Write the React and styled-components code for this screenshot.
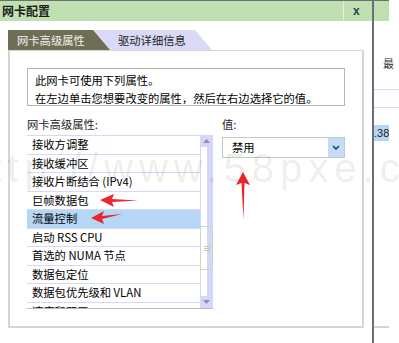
import React from 'react';
import styled, { createGlobalStyle } from 'styled-components';

const GlobalStyle = createGlobalStyle`
  html, body {
    margin: 0;
    padding: 0;
    background: #fff;
  }
  body {
    font-family: "Noto Sans CJK SC", "Liberation Sans", sans-serif;
    color: #000;
  }
`;

const Screen = styled.div`
  position: relative;
  width: 399px;
  height: 343px;
  overflow: hidden;
  background: #fff;
`;

const TitleBar = styled.div`
  position: relative;
  display: flex;
  align-items: center;
  width: 389px;
  height: 20px;
  border-top: 1px solid #6e6e6e;
  background: #c0e0b2;

  &::after {
    content: '';
    position: absolute;
    left: 372px;
    top: -1px;
    width: 2px;
    height: 22px;
    background: #6c6c7a;
  }
`;

const Title = styled.div`
  flex: 1;
  padding-left: 2px;
  font-size: 12px;
  font-weight: 700;
  color: #1c1c1c;
  line-height: 20px;
`;

const CloseBox = styled.div`
  width: 29px;
  height: 20px;
  margin-right: 17px;
  border-left: 1px solid #e6f0e0;
  display: flex;
  align-items: center;
  padding-left: 9px;
  box-sizing: border-box;
  font-family: "Liberation Sans", sans-serif;
  font-size: 12px;
  font-weight: 700;
  color: #24465a;
`;

const Content = styled.div`
  display: flex;
  height: 322px;
`;

const Main = styled.div`
  width: 372px;
  padding: 9px 0 0 8px;
  box-sizing: border-box;
`;

const Tabs = styled.div`
  display: flex;
  height: 20px;
`;

const Tab = styled.div`
  position: relative;
  z-index: ${p => (p.$active ? 2 : 1)};
  width: ${p => p.$width}px;
  margin-left: ${p => p.$overlap || 0}px;
  padding-left: ${p => p.$pad}px;
  box-sizing: border-box;
  background: ${p => (p.$active ? '#6e6e54' : '#dadaf8')};
  color: ${p => (p.$active ? '#f2f2ee' : '#1a1a1a')};
  clip-path: polygon(0 0, calc(100% - 17px) 0, 100% 100%, 0 100%);
  font-size: 11.3px;
  line-height: 20px;
`;

const Panel = styled.div`
  width: 356px;
  height: 278px;
  border: 2px solid #d6d6ce;
  border-top-width: 1px;
  box-sizing: border-box;
  padding: 17px 0 0 17px;
`;

const Description = styled.div`
  width: 318px;
  height: 38px;
  border: 1px solid #b4b4b0;
  box-sizing: border-box;
  padding: 2px 0 0 7px;
  font-size: 11.3px;
  line-height: 18px;
`;

const Columns = styled.div`
  display: flex;
  margin-top: 11px;
`;

const Column = styled.div`
  display: flex;
  flex-direction: column;
  width: ${p => p.$width}px;
  margin-left: ${p => p.$offset || 0}px;
`;

const FieldLabel = styled.div`
  font-size: 11.3px;
  line-height: 14px;
  color: #1e1e1e;
`;

const ListBox = styled.div`
  display: flex;
  height: 174px;
  margin-top: 4px;
  border-bottom: 1px solid #b8b8b4;
  box-sizing: border-box;
`;

const Items = styled.div`
  flex: 1;
  overflow: hidden;
  border-top: 1px solid #d8d8f6;
`;

const Item = styled.div`
  height: 17.5px;
  border-bottom: 1px solid #d8d8f6;
  padding-left: 5px;
  font-size: 11.3px;
  line-height: 17.5px;
  white-space: nowrap;
  background: ${p => (p.$selected ? '#b6d6f6' : '#fff')};
`;

const ScrollBar = styled.div`
  display: flex;
  flex-direction: column;
  width: 13px;
  background: linear-gradient(to right, #d6d6fa 0 1px, #fff 1px 7px, #d6d6fa 7px);
`;

const ScrollButton = styled.div`
  height: 12px;
  display: flex;
  align-items: center;
  justify-content: center;
  background: #d6d6fa;
`;

const Track = styled.div`
  flex: 1;
  display: flex;
  flex-direction: column;
`;

const Thumb = styled.div`
  height: 44px;
  margin-top: ${p => p.$top}px;
  border: 1px solid #c6dcbc;
  box-sizing: border-box;
  background: linear-gradient(to right, #fff 0 6px, #d6d6fa 6px);
  display: flex;
  align-items: center;
  justify-content: center;
`;

const Grip = styled.div`
  width: 6px;
  height: 5px;
  background: repeating-linear-gradient(to bottom, #c8c89a 0 1px, transparent 1px 2px);
`;

const Select = styled.div`
  display: flex;
  height: 21px;
  margin-top: 6px;
  border: 1px solid #bccebc;
  box-sizing: border-box;
`;

const SelectValue = styled.div`
  flex: 1;
  padding-left: 9px;
  font-size: 11.3px;
  line-height: 19px;
`;

const SelectButton = styled.div`
  width: 16px;
  display: flex;
  align-items: center;
  justify-content: center;
  background: #c4dcf8;
`;

const Strip = styled.div`
  flex: 1;
  border-left: 2px solid #6c6c7a;
  display: flex;
  flex-direction: column;
`;

const StripText = styled.div`
  margin-top: 36px;
  padding-left: 9px;
  font-size: 11px;
  line-height: 12px;
  color: #333;
`;

const StripRule = styled.div`
  height: 1px;
  margin-top: ${p => p.$gap}px;
  background: #d8d8f8;
`;

const StripCell = styled.div`
  width: 15px;
  height: 16px;
  margin-top: 17px;
  background: #b6d6f6;
  font-family: "Liberation Sans", sans-serif;
  font-size: 11px;
  line-height: 16px;
  color: #222;
  white-space: nowrap;
  overflow: hidden;
`;

const StripBase = styled.div`
  width: 15px;
  height: 2px;
  margin: auto 0 15px;
  background: #d6d6ce;
`;

const Watermark = styled.div`
  position: absolute;
  left: -38px;
  top: 148px;
  font-family: "Liberation Sans", Arial, sans-serif;
  font-size: 40px;
  line-height: 40px;
  letter-spacing: 6px;
  color: rgba(0, 0, 0, 0.085);
  white-space: nowrap;
  pointer-events: none;
`;

const Arrow = styled.svg`
  position: absolute;
  left: ${p => p.$x}px;
  top: ${p => p.$y}px;
  pointer-events: none;
`;

const properties = [
  '接收方调整',
  '接收缓冲区',
  '接收片断结合 (IPv4)',
  '巨帧数据包',
  '流量控制',
  '启动 RSS CPU',
  '首选的 NUMA 节点',
  '数据包定位',
  '数据包优先级和 VLAN',
  '速度和双工',
];

const Triangle = ({ down }) => (
  <svg width="7" height="4" viewBox="0 0 7 4">
    <path d={down ? 'M0 0H7L3.5 4Z' : 'M0 4H7L3.5 0Z'} fill="#8a96a8" />
  </svg>
);

const App = () => {
  return (
    <Screen>
      <GlobalStyle />
      <TitleBar>
        <Title>网卡配置</Title>
        <CloseBox>x</CloseBox>
      </TitleBar>

      <Content>
        <Main>
          <Tabs>
            <Tab $active $width={102} $pad={9}>网卡高级属性</Tab>
            <Tab $width={119} $overlap={-17} $pad={25}>驱动详细信息</Tab>
          </Tabs>

          <Panel>
            <Description>
              <div>此网卡可使用下列属性。</div>
              <div>在左边单击您想要改变的属性，然后在右边选择它的值。</div>
            </Description>

            <Columns>
              <Column $width={186}>
                <FieldLabel>网卡高级属性:</FieldLabel>
                <ListBox>
                  <Items>
                    {properties.map((name) => (
                      <Item key={name} $selected={name === '流量控制'}>{name}</Item>
                    ))}
                  </Items>
                  <ScrollBar>
                    <ScrollButton><Triangle /></ScrollButton>
                    <Track>
                      <Thumb $top={79}><Grip /></Thumb>
                    </Track>
                    <ScrollButton><Triangle down /></ScrollButton>
                  </ScrollBar>
                </ListBox>
              </Column>

              <Column $width={123} $offset={9}>
                <FieldLabel>值:</FieldLabel>
                <Select>
                  <SelectValue>禁用</SelectValue>
                  <SelectButton>
                    <svg width="8" height="5" viewBox="0 0 8 5">
                      <path d="M1 1L4 4L7 1" fill="none" stroke="#1c3a6a" strokeWidth="1.5" />
                    </svg>
                  </SelectButton>
                </Select>
              </Column>
            </Columns>
          </Panel>
        </Main>

        <Strip>
          <StripText>最</StripText>
          <StripRule $gap={20} />
          <StripRule $gap={17} />
          <StripCell>.38</StripCell>
          <StripBase />
        </Strip>
      </Content>

      <Watermark>http://www.58pxe.com</Watermark>

      <Arrow $x={99} $y={193} width="40" height="15" viewBox="0 0 40 15">
        <path d="M1 7L15 1L13 6L39 7.5L13 9L15 14Z" fill="#e8262c" />
      </Arrow>
      <Arrow $x={90} $y={209} width="33" height="16" viewBox="0 0 33 16">
        <path d="M1 9L14 2L12 7L32 5L12 10L14 15Z" fill="#e8262c" />
      </Arrow>
      <Arrow $x={235} $y={171} width="16" height="50" viewBox="0 0 16 50">
        <path d="M8 1L15 14L9.5 12L8.5 49L6.5 12L1 14Z" fill="#e8262c" />
      </Arrow>
    </Screen>
  );
};

export default App;
